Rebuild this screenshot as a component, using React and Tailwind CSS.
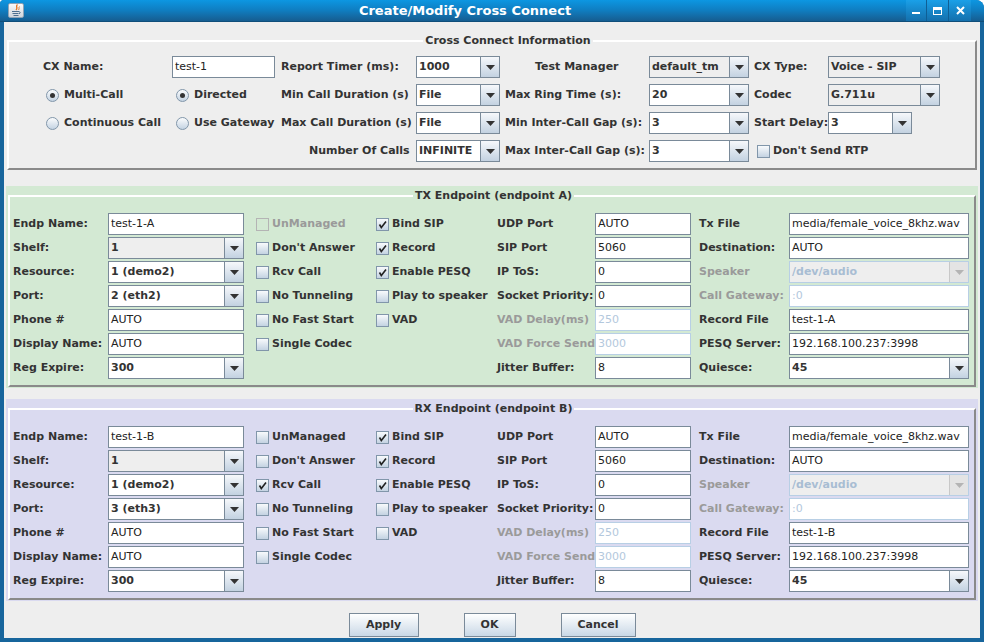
import React from 'react';

function Label({ children, disabled, className = '' }) {
  return (
    <div className={`h-[22px] flex items-center whitespace-nowrap font-bold ${disabled ? 'text-[#9a9a9a]' : 'text-[#333333]'} ${className}`}>
      {children}
    </div>
  );
}

function Field({ value, disabled }) {
  return (
    <div className={`h-[22px] flex items-center pl-[2px] overflow-hidden whitespace-nowrap bg-white border ${disabled ? 'border-[#b8cfe5] text-[#b3c8dd]' : 'border-[#7a8a99] text-[#222222]'}`}>
      {value}
    </div>
  );
}

function Arrow({ disabled }) {
  return (
    <svg width="9" height="5" viewBox="0 0 9 5">
      <path d="M0 0h9L4.5 5z" fill={disabled ? '#b4b4b4' : '#333333'} />
    </svg>
  );
}

function Combo({ value, gray, disabled, className = '' }) {
  return (
    <div className={`h-[22px] flex border ${disabled ? 'border-[#b8cfe5]' : 'border-[#7a8a99]'} ${className}`}>
      <div className={`flex-1 min-w-0 flex items-center pl-[2px] font-bold whitespace-nowrap overflow-hidden ${gray || disabled ? 'bg-[#eeeeee]' : 'bg-white'} ${disabled ? 'text-[#a8bdd3]' : 'text-[#333333]'}`}>
        {value}
      </div>
      <div className={`w-[19px] shrink-0 flex items-center justify-center border-l ${disabled ? 'border-[#c8c8c8] bg-[#e4e4e4]' : 'border-[#7a8a99] bg-gradient-to-b from-[#f6f8fb] to-[#c3d2e1]'}`}>
        <Arrow disabled={disabled} />
      </div>
    </div>
  );
}

function Check({ label, checked, disabled, className = '' }) {
  return (
    <div className={`h-[22px] flex items-center whitespace-nowrap font-bold ${className}`}>
      <span className={`w-[13px] h-[13px] shrink-0 border flex items-center justify-center ${disabled ? 'border-[#b4b4b4]' : 'border-[#8196aa] bg-gradient-to-b from-[#f8fafc] to-[#c4d3e2]'}`}>
        {checked && (
          <svg width="9" height="9" viewBox="0 0 9 9">
            <path d="M1.5 4.5L3.3 7.5L8 1.5" stroke="#222222" strokeWidth="1.6" fill="none" />
          </svg>
        )}
      </span>
      <span className={`ml-[3px] ${disabled ? 'text-[#9a9a9a]' : 'text-[#333333]'}`}>{label}</span>
    </div>
  );
}

function Radio({ label, checked, className = '' }) {
  return (
    <div className={`h-[22px] flex items-center whitespace-nowrap font-bold text-[#333333] ${className}`}>
      <span className="w-[13px] h-[13px] shrink-0 rounded-full border border-[#8196aa] bg-gradient-to-b from-[#fbfcfd] to-[#c4d3e2] flex items-center justify-center">
        {checked && <span className="w-[5px] h-[5px] rounded-full bg-[#333333]" />}
      </span>
      <span className="ml-[5px]">{label}</span>
    </div>
  );
}

function Button({ children, className = '' }) {
  return (
    <div className={`h-[24px] flex items-center justify-center border border-[#7a8a99] bg-gradient-to-b from-white to-[#c9d8e6] font-bold text-[#333333] ${className}`}>
      {children}
    </div>
  );
}

function Endpoint({ title, bg, name, port, unmanagedDisabled, rcvCall, className = '' }) {
  return (
    <div className={`mx-[2px] pt-[3px] pb-[1px] ${bg} ${className}`}>
      <fieldset className="mx-[2px] border-2 border-t-white border-l-white border-b-[#8a8a8a] border-r-[#8a8a8a] pt-[11px] pb-[6px] pl-[3px]">
        <legend className="mx-auto px-[2px] font-bold leading-[13px] text-[#333333]">{title}</legend>
        <div className="grid grid-cols-[95px_136px_132px_121px_98px_96px_98px_180px] gap-y-[2px]">
          <Label>Endp Name:</Label>
          <Field value={name} />
          <Check className="pl-[12px]" label="UnManaged" disabled={unmanagedDisabled} />
          <Check label="Bind SIP" checked />
          <Label>UDP Port</Label>
          <Field value="AUTO" />
          <Label className="pl-[8px]">Tx File</Label>
          <Field value="media/female_voice_8khz.wav" />

          <Label>Shelf:</Label>
          <Combo value="1" gray />
          <Check className="pl-[12px]" label="Don't Answer" />
          <Check label="Record" checked />
          <Label>SIP Port</Label>
          <Field value="5060" />
          <Label className="pl-[8px]">Destination:</Label>
          <Field value="AUTO" />

          <Label>Resource:</Label>
          <Combo value="1 (demo2)" />
          <Check className="pl-[12px]" label="Rcv Call" checked={rcvCall} />
          <Check label="Enable PESQ" checked />
          <Label>IP ToS:</Label>
          <Field value="0" />
          <Label className="pl-[8px]" disabled>Speaker</Label>
          <Combo value="/dev/audio" disabled />

          <Label>Port:</Label>
          <Combo value={port} />
          <Check className="pl-[12px]" label="No Tunneling" />
          <Check label="Play to speaker" />
          <Label>Socket Priority:</Label>
          <Field value="0" />
          <Label className="pl-[8px]" disabled>Call Gateway:</Label>
          <Field value=":0" disabled />

          <Label>Phone #</Label>
          <Field value="AUTO" />
          <Check className="pl-[12px]" label="No Fast Start" />
          <Check label="VAD" />
          <Label disabled>VAD Delay(ms)</Label>
          <Field value="250" disabled />
          <Label className="pl-[8px]">Record File</Label>
          <Field value={name} />

          <Label>Display Name:</Label>
          <Field value="AUTO" />
          <Check className="pl-[12px]" label="Single Codec" />
          <div />
          <Label disabled>VAD Force Send</Label>
          <Field value="3000" disabled />
          <Label className="pl-[8px]">PESQ Server:</Label>
          <Field value="192.168.100.237:3998" />

          <Label>Reg Expire:</Label>
          <Combo value="300" />
          <div />
          <div />
          <Label>Jitter Buffer:</Label>
          <Field value="8" />
          <Label className="pl-[8px]">Quiesce:</Label>
          <Combo value="45" />
        </div>
      </fieldset>
    </div>
  );
}

function JavaIcon() {
  return (
    <div className="ml-[8px] w-[16px] h-[15px] border border-[#8fa3b6] rounded-[2px] bg-gradient-to-b from-[#fafafa] to-[#cfd6dd] flex items-center justify-center">
      <svg width="13" height="13" viewBox="0 0 13 13">
        <path d="M7.5 0.5C5 2.5 8.5 3.5 6 6" stroke="#e8731c" strokeWidth="1.3" fill="none" />
        <path d="M9.5 2.5C8.3 4 9.8 4.5 8.5 6" stroke="#e8731c" strokeWidth="0.9" fill="none" />
        <path d="M2 7.5h7M2.5 9.5h6M3.5 11.5h5" stroke="#4d6f8f" strokeWidth="1.2" />
        <path d="M9 7.6q2.6 0.6 0 2.4" stroke="#4d6f8f" strokeWidth="1" fill="none" />
      </svg>
    </div>
  );
}

export default function App() {
  return (
    <div className="w-[984px] h-[642px] flex flex-col bg-[#17659c] rounded-tl-[4px] rounded-tr-[8px] overflow-hidden text-[11px] font-['DejaVu_Sans','Liberation_Sans',sans-serif]">
      <div className="h-[22px] shrink-0 flex items-center bg-gradient-to-b from-[#0c97e2] via-[#0f7dc0] to-[#155d90] border-b border-[#0f4e7a]">
        <JavaIcon />
        <div className="flex-1 text-center text-white font-bold text-[13px]">Create/Modify Cross Connect</div>
        <div className="flex self-stretch mr-[13px]">
          <div className="w-[21px] flex items-end justify-center pb-[7px] bg-gradient-to-b from-[#1aa0e8] to-[#1470ad] border-r border-[#0f5f95]">
            <span className="w-[8px] h-[2px] bg-white" />
          </div>
          <div className="w-[22px] flex items-center justify-center bg-gradient-to-b from-[#1aa0e8] to-[#1470ad] border-r border-[#0f5f95]">
            <span className="w-[9px] h-[8px] border border-white border-t-[3px]" />
          </div>
          <div className="w-[22px] flex items-center justify-center bg-gradient-to-b from-[#1aa0e8] to-[#1470ad]">
            <svg width="9" height="9" viewBox="0 0 9 9">
              <path d="M1 1L8 8M8 1L1 8" stroke="white" strokeWidth="2" />
            </svg>
          </div>
        </div>
      </div>

      <div className="flex-1 mx-[4px] mb-[4px] bg-[#eeeeee] flex flex-col">
        <fieldset className="mx-[3px] mt-[12px] border-2 border-t-white border-l-white border-b-[#8a8a8a] border-r-[#8a8a8a] pt-[9px] pb-[6px] pl-[32px]">
          <legend className="mx-auto px-[2px] font-bold leading-[13px] text-[#333333]">Cross Connect Information</legend>
          <div className="grid grid-cols-[131px_103px_141px_84px_149px_100px_79px_112px] gap-y-[6px]">
            <Label className="pl-[2px]">CX Name:</Label>
            <Field value="test-1" />
            <Label className="pl-[6px]">Report Timer (ms):</Label>
            <Combo value="1000" />
            <Label className="pl-[35px]">Test Manager</Label>
            <Combo value="default_tm" gray />
            <Label className="pl-[5px]">CX Type:</Label>
            <Combo value="Voice - SIP" gray />

            <Radio className="pl-[5px]" label="Multi-Call" checked />
            <Radio className="pl-[4px]" label="Directed" checked />
            <Label className="pl-[6px]">Min Call Duration (s)</Label>
            <Combo value="File" />
            <Label className="pl-[5px]">Max Ring Time (s):</Label>
            <Combo value="20" />
            <Label className="pl-[5px]">Codec</Label>
            <Combo value="G.711u" gray />

            <Radio className="pl-[5px]" label="Continuous Call" />
            <Radio className="pl-[4px]" label="Use Gateway" />
            <Label className="pl-[6px]">Max Call Duration (s)</Label>
            <Combo value="File" />
            <Label className="pl-[5px]">Min Inter-Call Gap (s):</Label>
            <Combo value="3" />
            <Label className="pl-[5px]">Start Delay:</Label>
            <Combo value="3" className="w-[84px]" />

            <div />
            <div />
            <Label className="pl-[34px]">Number Of Calls</Label>
            <Combo value="INFINITE" />
            <Label className="pl-[5px]">Max Inter-Call Gap (s):</Label>
            <Combo value="3" />
            <Check className="pl-[8px]" label="Don't Send RTP" />
            <div />
          </div>
        </fieldset>

        <Endpoint
          className="mt-[16px]"
          title="TX Endpoint (endpoint A)"
          bg="bg-[#d3e9d3]"
          name="test-1-A"
          port="2 (eth2)"
          unmanagedDisabled
        />
        <Endpoint
          className="mt-[11px]"
          title="RX Endpoint (endpoint B)"
          bg="bg-[#dadaf0]"
          name="test-1-B"
          port="3 (eth3)"
          rcvCall
        />

        <div className="flex justify-center gap-[45px] mt-[12px]">
          <Button className="w-[70px]">Apply</Button>
          <Button className="w-[52px]">OK</Button>
          <Button className="w-[75px]">Cancel</Button>
        </div>
      </div>
    </div>
  );
}
